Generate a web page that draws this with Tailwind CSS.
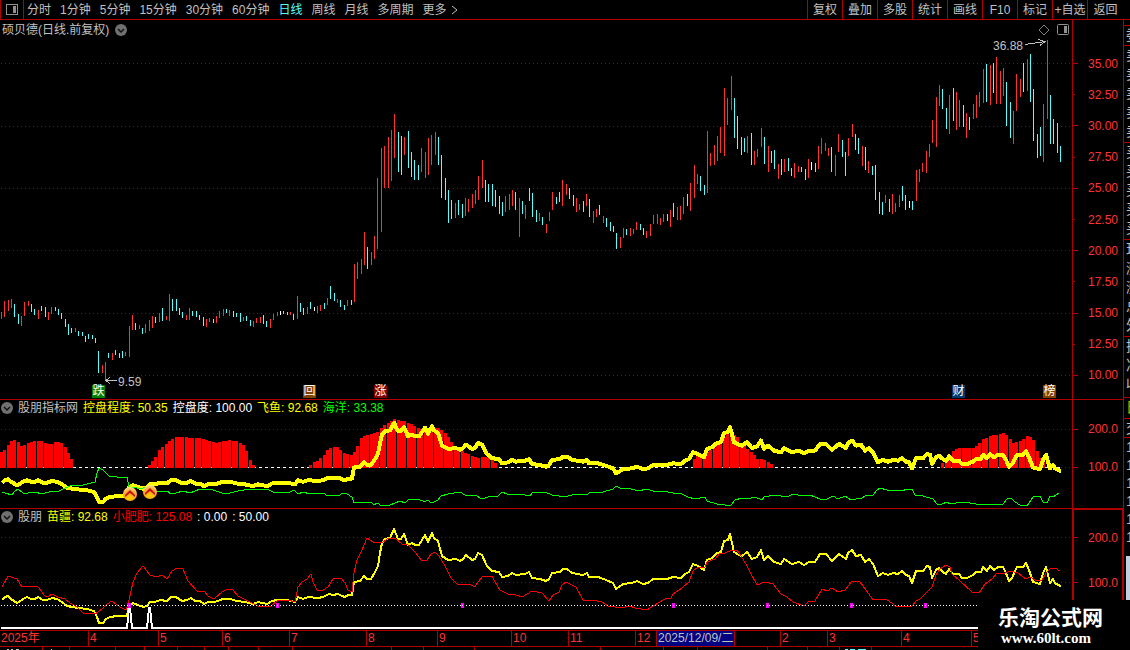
<!DOCTYPE html>
<html lang="zh-CN">
<head>
  <meta charset="UTF-8">
  <meta name="viewport" content="width=device-width, initial-scale=1.0">
  <title>硕贝德 日线</title>
  <script src="https://cdn.jsdelivr.net/npm/@tailwindcss/browser@4"></script>
</head>
<body class="bg-black text-[#c0c0c0] text-xs leading-4 font-['Liberation_Sans','Noto_Sans_CJK_SC',sans-serif]">
  <div class="relative flex flex-col h-screen overflow-hidden">

    <!-- Toolbar -->
    <header class="flex h-5 shrink-0 border-b border-[#b00000] whitespace-nowrap">
      <button class="w-6 shrink-0 flex items-center justify-center border-x border-[#b00000]" aria-label="侧栏">
        <svg class="w-3 h-3" viewBox="0 0 12 12" shape-rendering="crispEdges"><rect x="0.5" y="0.5" width="11" height="10" rx="1" fill="none" stroke="#909090"/><rect x="7" y="2" width="3" height="7" fill="#909090"/></svg>
      </button>
      <nav class="flex items-center gap-[9px] pl-[3px]">
        <button>分时</button>
        <button>1分钟</button>
        <button>5分钟</button>
        <button>15分钟</button>
        <button>30分钟</button>
        <button>60分钟</button>
        <button class="text-[#54ffff]">日线</button>
        <button>周线</button>
        <button>月线</button>
        <button>多周期</button>
        <button class="flex items-center gap-1">更多
          <svg class="w-2 h-2.5" viewBox="0 0 8 10"><path d="M1 1L6 5L1 9" fill="none" stroke="#c0c0c0"/></svg>
        </button>
      </nav>
      <div class="ml-auto mr-[7px] flex">
        <button class="w-[35px] border-l border-[#b00000]">复权</button>
        <button class="w-[35px] border-l border-[#b00000]">叠加</button>
        <button class="w-[35px] border-l border-[#b00000]">多股</button>
        <button class="w-[35px] border-l border-[#b00000]">统计</button>
        <button class="w-[35px] border-l border-[#b00000]">画线</button>
        <button class="w-[35px] border-l border-[#b00000]">F10</button>
        <button class="w-[35px] border-l border-[#b00000]">标记</button>
        <button class="w-[35px] border-l border-[#b00000]">+自选</button>
        <button class="w-[36px] border-l border-[#b00000]">返回</button>
      </div>
    </header>

    <div class="flex flex-1 min-h-0">
      <main class="flex-1 min-w-0 grid grid-rows-[380fr_109fr_121fr_17fr_3fr]">

        <!-- Price -->
        <section class="grid grid-cols-[1fr_51px] border-b border-[#b00000] min-h-0">
          <div class="relative min-w-0">
            <svg id="price" class="absolute inset-0 w-full h-full" viewBox="0 20 1072 379" preserveAspectRatio="none" shape-rendering="crispEdges"></svg>
            <h1 class="relative flex items-center gap-1.5 pl-0.5 pt-0.5">硕贝德(日线.前复权)
              <svg class="w-3 h-3" viewBox="0 0 12 12"><circle cx="6" cy="6" r="6" fill="#707070"/><path d="M3 5L6 8L9 5" fill="none" stroke="#111" stroke-width="1.5"/></svg>
            </h1>
            <svg class="absolute right-[22px] top-1 w-3 h-3" viewBox="0 0 12 12"><path d="M6 1L11 6L6 11L1 6Z" fill="none" stroke="#808080"/></svg>
            <svg class="absolute right-[3px] top-1 w-3 h-3" viewBox="0 0 12 12"><rect x="0.5" y="0.5" width="11" height="10" rx="1" fill="none" stroke="#909090"/><rect x="7" y="2" width="3" height="7" fill="#909090"/></svg>
            <span class="absolute right-[49px] top-[18px]">36.88</span>
            <span class="absolute left-[118px] top-[354px]">9.59</span>
            <span class="absolute left-[92px] bottom-px w-[13px] h-[13px] leading-[13px] text-center bg-[#008000] text-white">跌</span>
            <span class="absolute left-[303px] bottom-px w-[13px] h-[13px] leading-[13px] text-center bg-[#804000] text-white">回</span>
            <span class="absolute left-[374px] bottom-px w-[13px] h-[13px] leading-[13px] text-center bg-[#800000] text-white">涨</span>
            <span class="absolute right-[107px] bottom-px w-[13px] h-[13px] leading-[13px] text-center bg-[#003870] text-white">财</span>
            <span class="absolute right-4 bottom-px w-[13px] h-[13px] leading-[13px] text-center bg-[#804000] text-white">榜</span>
          </div>
          <ol id="priceAxis" class="flex flex-col border-l border-[#b00000] pt-7 pb-2 pr-[5px] text-[#ff3232]"></ol>
        </section>

        <!-- Control indicator -->
        <section class="grid grid-cols-[1fr_51px] border-b border-[#b00000] min-h-0">
          <div class="relative min-w-0">
            <svg id="control" class="absolute inset-0 w-full h-full" viewBox="0 400 1072 108" preserveAspectRatio="none" shape-rendering="crispEdges"></svg>
            <h2 class="relative flex items-center gap-[5px] pl-px">
              <svg class="w-3 h-3" viewBox="0 0 12 12"><circle cx="6" cy="6" r="6" fill="#707070"/><path d="M3 5L6 8L9 5" fill="none" stroke="#111" stroke-width="1.5"/></svg>
              <span>股朋指标网</span>
              <span class="text-[#ffff00]">控盘程度: 50.35</span>
              <span class="text-white">控盘度: 100.00</span>
              <span class="text-[#ffff00]">飞鱼: 92.68</span>
              <span class="text-[#00ff00]">海洋: 33.38</span>
            </h2>
          </div>
          <ol class="flex flex-col border-l border-[#b00000] pt-[10px] pr-[5px] text-[#ff3232]">
            <li class="h-[38px] flex items-center justify-between"><i class="w-[5px] h-px bg-[#b00000]"></i>200.0</li>
            <li class="h-[38px] flex items-center justify-between"><i class="w-[5px] h-px bg-[#b00000]"></i>100.0</li>
          </ol>
        </section>

        <!-- Second indicator -->
        <section class="grid grid-cols-[1fr_51px] min-h-0">
          <div class="relative min-w-0">
            <svg id="trend" class="absolute inset-0 w-full h-full" viewBox="0 509 1072 121" preserveAspectRatio="none" shape-rendering="crispEdges"></svg>
            <h2 class="relative flex items-center gap-[5px] pl-px">
              <svg class="w-3 h-3" viewBox="0 0 12 12"><circle cx="6" cy="6" r="6" fill="#707070"/><path d="M3 5L6 8L9 5" fill="none" stroke="#111" stroke-width="1.5"/></svg>
              <span>股朋</span>
              <span class="text-[#ffff00]">苗疆: 92.68</span>
              <span class="text-[#ff0000]">小肥肥: 125.08</span>
              <span class="text-white">: 0.00</span>
              <span class="text-white">: 50.00</span>
            </h2>
          </div>
          <ol class="flex flex-col border-l-2 border-t border-r border-[#b00000] pt-[5px] pr-1 text-[#ff3232]">
            <li class="h-[45px] flex items-center justify-between"><i class="w-1 h-px bg-[#b00000]"></i>200.0</li>
            <li class="h-[45px] flex items-center justify-between"><i class="w-1 h-px bg-[#b00000]"></i>100.0</li>
          </ol>
        </section>

        <!-- Dates -->
        <ol class="grid grid-cols-[88fr_70fr_64fr_67fr_77fr_71fr_74fr_57fr_67fr_21fr_78fr_46fr_47fr_74fr_70fr_152fr] border-y border-[#b00000] text-[#ff3232] leading-[15px] whitespace-nowrap min-h-0 *:border-l *:border-[#b00000] *:pl-px *:min-w-0">
          <li class="border-l-0!">2025年</li>
          <li>4</li>
          <li>5</li>
          <li>6</li>
          <li>7</li>
          <li>8</li>
          <li>9</li>
          <li>10</li>
          <li>11</li>
          <li>12</li>
          <li class="bg-[#000080] text-[#c0c0c0]">2025/12/09/二</li>
          <li></li>
          <li>2</li>
          <li>3</li>
          <li>4</li>
          <li>5</li>
        </ol>

        <svg id="footer" class="w-full h-full min-h-0" viewBox="0 647 1123 3" preserveAspectRatio="none" shape-rendering="crispEdges"></svg>
      </main>

      <!-- Quote panel, mostly off screen -->
      <aside class="w-[7px] shrink-0 overflow-hidden border-l border-[#b00000] whitespace-nowrap text-sm leading-[19px]">
        <div class="h-[6px] border-b border-[#b00000]"></div>
        <p class="h-[20px] pl-0.5 border-b border-[#b00000]">委比</p>
        <div class="h-[97px] pl-0.5 border-b border-[#b00000]"><p>卖五</p><p>卖四</p><p>卖三</p><p>卖二</p><p>卖一</p></div>
        <div class="h-[97px] pl-0.5 border-b border-[#b00000]"><p>买一</p><p>买二</p><p>买三</p><p>买四</p><p>买五</p></div>
        <div class="h-[97px] pl-0.5 border-b border-[#b00000]"><p>现价</p><p>涨跌</p><p>涨幅</p><p>总量</p><p>外盘</p></div>
        <div class="h-[61px] pl-0.5 border-b border-[#b00000]"><p>换手</p><p>净资</p><p>收益</p></div>
        <p class="h-[21px] pl-0.5 border-b border-[#b00000] text-[#c0c000]">日</p>
        <p class="h-[19px] pl-0.5 border-b border-[#b00000]">交易</p>
        <div class="pl-0.5 leading-[18px]"><p>14:5</p><p>14:5</p><p>14:5</p><p>14:5</p><p>14:5</p><p>14:5</p></div>
        <div class="ml-0.5 mt-2.5 h-14 bg-[#c0d0e0]"></div>
      </aside>
    </div>

    <!-- Site mark -->
    <div class="absolute right-0 bottom-0 w-[152px] h-[50px] pt-1.5 pl-5 bg-black text-white font-bold whitespace-nowrap">
      <p class="text-[21px] leading-6">乐淘公式网</p>
      <p class="pl-[3px] text-[15px] leading-4 font-['Liberation_Serif',serif]">www.60lt.com</p>
    </div>
  </div>

  <script>
    const NS = 'http://www.w3.org/2000/svg';
    const STEP = 3.363;
    const LAST = 1060;

    // One entry per trading day: colour (r up, c down, w flat), high, low
    const candles = `r312-319 r301-317 r300-311 r299-308 c304-317 c314-324 r316-326 r302-316 r301-306 c304-312
      c309-315 r310-319 c306-311 c307-317 r312-320 r307-314 c307-311 c309-315 c313-319 c319-327
      c324-335 c328-333 r328-332 c331-336 c332-336 c336-342 c334-339 c335-339 c338-343 c351-373
      r365-373 r362-380 c353-358 r353-360 c350-355 c353-358 c351-358 r352-356 r326-357 r315-330
      c323-330 r325-329 c328-334 r324-333 r320-331 r316-328 c317-323 r313-322 c308-321 r316-320
      r294-321 c299-311 c299-311 c308-315 c312-318 r315-320 r308-320 c311-316 c311-317 c315-320
      c317-326 r319-327 r318-322 c319-323 r316-323 r311-318 r309-316 c309-313 r310-316 c311-317
      c313-317 c313-322 r317-321 c316-321 c320-326 r321-327 r318-323 r317-323 c315-324 c321-327
      r319-328 r314-320 r312-316 w311-315 c311-314 c312-315 r312-315 c314-320 r296-319 c303-312
      c308-315 r307-314 c302-309 w307-311 r306-313 r305-311 c303-309 r298-305 c286-299 c293-301
      r299-303 c300-307 c305-310 r300-306 c300-305 r264-302 r262-279 r259-274 r232-265 c247-269
      r252-265 r236-259 r178-249 r148-232 r146-188 r137-188 r130-181 r114-158 c132-172 c136-175
      r137-155 c131-168 c152-177 c160-180 c165-180 r148-172 r152-178 r138-175 r135-165 r132-155
      c137-165 c155-198 c178-200 c190-223 c200-219 r203-218 c200-215 c204-218 r198-216 r199-212
      r194-208 r190-204 r176-200 r160-188 c180-202 c184-202 c184-206 c190-207 c196-214 c202-216
      r196-212 r194-210 r190-206 c192-210 r198-237 c201-214 r205-219 c188-201 c193-217 c210-222
      r213-221 c217-225 r224-233 r212-221 r192-210 c197-204 c192-202 r180-206 r184-195 c188-199
      c195-206 r198-212 r204-210 c201-212 r194-206 c199-217 r211-223 r209-217 c205-215 r216-223
      c218-227 c222-231 c226-232 c233-249 r237-248 r228-238 c229-235 r228-236 r229-234 r222-230
      c224-230 c228-235 r231-238 r224-236 r215-224 r214-224 r218-225 r214-222 c214-221 r210-227
      c203-217 r207-220 r206-220 r197-214 c194-206 r183-211 r165-198 r174-184 c176-191 c185-195
      r131-193 r153-166 r145-165 r136-161 r127-153 r88-156 r98-125 r76-110 c98-138 c116-149
      c137-155 c138-152 r136-153 c133-165 r151-165 r149-157 r128-147 c137-164 r146-172 c151-163
      c150-169 r164-179 c159-175 r159-172 c158-171 c168-176 r163-178 r166-172 c167-172 c169-180
      r159-178 w162-170 c163-172 r146-169 r138-154 r143-151 r148-156 c147-172 r155-176 r134-152
      c140-157 c152-176 r138-156 r124-137 c134-150 c138-154 r146-166 c147-170 r161-173 c166-175
      c165-200 c192-214 c202-215 r195-203 c199-212 r194-214 r203-212 r195-207 c186-201 c195-210
      w201-208 c201-210 r170-201 r169-182 r163-172 r151-173 r144-157 r120-143 r97-147 r85-106
      c89-109 c108-129 r95-134 c88-121 r92-130 r100-127 c105-127 r113-138 c117-130 r104-119
      r95-118 r92-107 r69-103 c64-102 r65-105 c63-93 r57-104 r71-104 r68-96 c82-126
      c102-138 r111-144 r74-111 r79-97 c63-92 r59-91 c54-102 c89-141 c134-158 c127-156
      r104-162 r40-119 c95-144 c119-144 c123-153 c146-162`.trim().split(/\s+/);

    const yellow = `2,600 5,597 8,596 11,599 17,603 19,602 23,599 27,597 31,599 35,599 38,597 43,600 47,600 52,598 57,599 62,602 67,606 72,607 78,608 87,609 94,611 97,617 99,623 103,623 106,619 110,617 117,616 127,616 129,606 133,603 138,605 143,607 147,606 150,602 155,602 160,600 167,601 171,597 176,597 182,601 187,600 191,598 195,601 200,601 204,604 208,602 215,602 223,599 230,599 237,601 245,602 253,604 258,602 267,604 272,601 277,600 287,600 295,602 298,597 303,599 308,597 318,598 323,597 329,594 333,595 338,594 342,596 345,597 348,595 352,595 354,582 360,581 364,576 367,579 371,579 375,572 378,566 380,553 382,543 385,539 390,538 394,529 398,539 401,539 404,534 408,545 412,543 415,545 419,545 422,540 425,535 428,542 432,533 434,538 438,541 442,556 448,560 456,559 460,561 463,559 466,555 472,560 475,559 478,553 482,555 487,566 492,571 499,572 502,577 508,576 512,573 516,575 525,574 529,572 532,578 540,579 546,581 549,579 552,573 560,572 563,569 567,569 572,573 583,575 587,573 589,577 598,577 606,580 613,583 616,589 623,584 632,583 637,581 643,584 648,583 653,579 667,579 673,577 681,578 685,574 689,572 693,564 698,566 704,570 707,560 712,558 717,553 721,552 724,541 728,540 730,534 734,552 739,555 742,556 747,552 752,559 757,557 761,550 764,560 768,556 774,562 781,564 784,559 792,564 799,562 804,565 809,562 815,562 820,554 826,554 832,561 839,554 846,559 848,553 852,550 856,556 861,555 865,562 869,559 873,564 878,576 883,573 888,575 893,573 898,574 902,571 906,575 909,576 912,583 916,571 923,571 927,566 930,567 932,578 936,570 939,568 943,572 946,574 949,569 953,574 959,574 962,578 967,578 973,575 976,572 981,572 983,567 987,571 990,566 994,570 998,567 1003,567 1006,573 1009,581 1012,578 1017,567 1023,567 1026,563 1029,570 1033,582 1040,584 1043,573 1046,567 1050,583 1053,579 1055,583 1058,585 1061,586`;
    const red = `2,587 8,576 17,579 22,587 30,586 38,587 45,596 49,596 52,594 58,597 65,599 70,603 77,607 83,613 95,614 102,609 107,604 112,601 117,605 122,608 126,610 129,600 133,582 137,573 143,566 150,575 156,577 162,575 167,579 172,571 177,568 183,569 188,581 198,592 204,591 208,596 214,599 222,592 228,589 233,590 238,596 250,602 258,606 271,606 277,601 288,600 295,602 298,587 302,582 307,579 311,574 313,582 317,590 323,590 328,587 333,579 341,578 345,583 348,590 352,592 354,573 357,560 362,550 367,538 373,542 382,543 387,539 395,538 402,544 408,545 415,552 422,561 427,560 431,554 435,552 439,556 445,566 451,578 457,584 469,584 475,587 478,582 483,576 492,576 495,582 500,590 510,595 513,594 522,597 532,591 542,593 549,601 553,595 559,592 562,585 566,582 576,587 583,600 592,600 602,602 608,606 615,607 625,607 630,606 635,608 647,610 653,606 665,599 671,598 673,594 682,588 689,582 693,571 698,567 705,567 707,562 715,559 720,553 725,553 732,550 737,550 741,556 747,566 750,572 757,585 765,582 773,584 781,594 787,597 793,602 804,606 809,601 815,601 822,589 827,591 832,588 838,592 845,590 852,581 860,582 866,590 873,600 878,599 887,600 892,603 896,607 903,606 912,606 916,601 920,599 926,593 932,587 936,575 940,569 946,565 950,567 952,574 960,581 972,592 979,593 985,584 992,579 997,573 1003,574 1010,571 1018,573 1026,579 1030,577 1035,580 1042,580 1046,573 1050,569 1055,568 1060,571`;
    const green = `2,492 5,493 12,495 15,491 18,489 23,493 28,493 35,492 42,494 52,491 57,492 63,489 70,486 83,485 95,482 97,473 99,468 103,470 109,476 117,477 127,477 129,487 137,488 143,488 148,487 155,491 160,492 167,491 171,494 176,493 183,491 190,493 200,489 213,490 222,493 230,493 238,491 250,489 267,489 273,492 290,492 294,490 298,494 303,492 310,494 323,493 328,496 333,495 338,496 343,493 347,494 352,497 354,503 365,502 372,503 374,505 377,503 382,506 390,505 400,501 405,503 409,499 418,499 425,502 427,500 432,503 438,500 441,496 448,494 460,492 465,495 475,495 482,499 488,497 498,496 502,492 507,494 513,495 520,494 530,496 533,492 545,492 552,495 565,497 575,494 587,495 590,492 603,492 613,489 616,486 622,489 628,488 638,491 647,489 653,491 663,491 673,493 680,493 688,497 695,499 705,497 707,501 717,504 725,505 731,505 735,500 742,498 747,499 755,497 762,500 764,497 775,495 787,497 793,494 803,496 810,495 820,499 827,499 833,496 838,499 845,496 851,500 862,498 865,496 873,495 877,490 880,488 887,490 897,490 902,491 907,489 912,489 915,495 923,496 933,499 937,504 942,504 947,502 950,504 963,502 970,503 982,505 993,504 1003,504 1007,499 1011,498 1015,502 1020,505 1027,506 1033,497 1040,496 1043,502 1047,503 1050,496 1053,497 1059,493`;

    // Outlines of the red histogram groups
    const hills = [
      '0,453 5,449 9,444 12,440 15,440 18,442 21,446 25,445 28,443 32,441 40,441 45,443 50,444 55,442 60,442 63,444 66,448 69,455 73,462',
      '148,466 152,461 155,457 158,451 162,447 166,444 170,440 175,437 185,437 190,438 200,438 205,440 215,443 222,441 230,440 236,441 240,443 243,445 246,451 249,458 253,465',
      '308,466 313,463 318,460 323,456 327,450 332,447 337,447 342,452 348,454 352,455 355,450 360,439 363,436 368,435 373,434 380,430 383,425 388,423 393,419 398,420 407,422 412,425 420,429 438,428 447,435 453,445 463,452 468,454 473,457 478,458 483,457 488,458 492,460 496,464',
      '692,462 697,455 702,456 710,450 715,448 720,440 725,436 728,433 732,433 737,437 740,442 747,449 752,453 757,459 763,459 767,462 772,464',
      '942,463 947,457 952,452 958,448 973,448 978,444 983,439 990,436 998,434 1003,433 1008,437 1013,443 1018,442 1024,438 1028,435 1033,440 1036,448 1040,458 1043,462 1046,465'
    ];

    function draw(parent, name, attrs) {
      const el = document.createElementNS(NS, name);
      for (const key in attrs) el.setAttribute(key, attrs[key]);
      parent.appendChild(el);
      return el;
    }

    function gridLine(svg, y, color = '#a00000', dash = '1 3', end = 1072) {
      draw(svg, 'line', { x1: 1, x2: end, y1: y + 0.5, y2: y + 0.5, stroke: color, 'stroke-dasharray': dash });
    }

    function curve(svg, points, color, width) {
      draw(svg, 'polyline', { points, fill: 'none', stroke: color, 'stroke-width': width, 'stroke-linejoin': 'round' });
    }

    function toPoints(text) {
      return text.split(' ').map(p => p.split(',').map(Number));
    }

    function dayX(i) {
      return Math.floor(1.3 + i * STEP);
    }

    // Price chart
    const price = document.getElementById('price');
    [63, 126, 188, 250, 313, 375].forEach(y => gridLine(price, y));
    const colors = { r: '#ff3232', c: '#54ffff', w: '#ffffff' };
    candles.forEach((c, i) => {
      const [top, bottom] = c.slice(1).split('-').map(Number);
      draw(price, 'rect', { x: dayX(i), y: top, width: 1, height: bottom - top, fill: colors[c[0]] });
    });
    draw(price, 'path', { d: 'M1025 44.5L1045 41.5M1038 39.5L1045 41.5L1040 45.5M117 380.5H106M110 377.5L106 380.5L110 383.5', fill: 'none', stroke: '#c0c0c0' });

    // Control chart
    const control = document.getElementById('control');
    gridLine(control, 429);
    gridLine(control, 467);
    gridLine(control, 467, '#ffffff', '3 3', LAST);
    hills.forEach(text => {
      const pts = toPoints(text);
      for (let i = 0; i < candles.length; i++) {
        const x = dayX(i);
        const k = pts.findIndex((p, n) => n > 0 && x >= pts[n - 1][0] && x <= p[0]);
        if (k < 0) continue;
        const [x0, y0] = pts[k - 1];
        const [x1, y1] = pts[k];
        const y = Math.round(y0 + (y1 - y0) * (x - x0) / (x1 - x0));
        draw(control, 'rect', { x: x - 1, y, width: 3, height: 468 - y, fill: '#ff0000' });
      }
    });
    const scaled = toPoints(yellow).map(([x, y]) => x + ',' + (467.5 - (582 - y) * 0.844).toFixed(1)).join(' ');
    curve(control, scaled, '#ffff00', 4);
    curve(control, green, '#00ff00', 1);

    // Coin markers
    const defs = draw(control, 'defs', {});
    const gold = draw(defs, 'radialGradient', { id: 'gold', cx: 0.5, cy: 0.8, r: 0.8 });
    draw(gold, 'stop', { offset: 0, 'stop-color': '#ffc000' });
    draw(gold, 'stop', { offset: 0.6, 'stop-color': '#ffa030' });
    draw(gold, 'stop', { offset: 1, 'stop-color': '#ffe890' });
    [[130, 494], [150, 492]].forEach(([x, y]) => {
      const g = draw(control, 'g', { transform: `translate(${x} ${y})`, 'shape-rendering': 'auto' });
      draw(g, 'circle', { r: 7, fill: 'url(#gold)' });
      draw(g, 'path', { d: 'M-5 1L0 -4L5 1V3L0 -1L-5 3Z', fill: '#c01010' });
      draw(g, 'path', { d: 'M-4 5L0 1L4 5Z', fill: '#ffc800' });
    });

    // Trend chart
    const trend = document.getElementById('trend');
    gridLine(trend, 537);
    gridLine(trend, 582);
    curve(trend, yellow, '#ffff00', 2);
    curve(trend, red, '#ff0000', 1);
    curve(trend, '1,628 127,628 129,608 130,608 132,628 147,628 149,608 150,608 152,628 1060,628', '#ffffff', 2);
    gridLine(trend, 605, '#ffffff', '1 2', LAST);
    [129, 277, 462, 673, 767, 851, 925].forEach(x => {
      draw(trend, 'rect', { x: x - 1, y: 603, width: 3, height: 5, fill: '#ff00ff' });
      draw(trend, 'rect', { x, y: 605, width: 1, height: 1, fill: '#ffc0ff' });
    });

    // Cells that peek in below the date row
    const footer = document.getElementById('footer');
    [42, 69, 115, 144, 177, 204, 228, 258, 292, 391, 423, 474, 600, 663, 697, 767, 807, 839, 871].forEach(x => {
      draw(footer, 'rect', { x, y: 647, width: 1, height: 3, fill: '#b00000' });
    });
    [[7, 2], [11, 2], [16, 3], [51, 1]].forEach(([x, w]) => draw(footer, 'rect', { x, y: 649, width: w, height: 1, fill: '#c0c0c0' }));
    [[845, 3], [850, 5], [858, 8]].forEach(([x, w]) => draw(footer, 'rect', { x, y: 649, width: w, height: 1, fill: '#54ffff' }));

    // Price scale
    const priceAxis = document.getElementById('priceAxis');
    for (let v = 35; v >= 10; v -= 2.5) {
      const li = document.createElement('li');
      li.className = 'flex-1 flex items-center justify-between';
      li.innerHTML = (v % 5 === 0 ? '<i class="w-[5px] h-px bg-[#b00000]"></i>' : '<i class="w-0.5 h-px bg-[#b00000]"></i>') + v.toFixed(2);
      priceAxis.appendChild(li);
    }
  </script>
</body>
</html>
